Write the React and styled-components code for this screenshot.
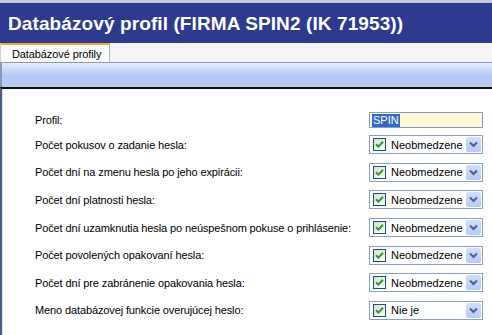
import React from "react";
import styled, { createGlobalStyle } from "styled-components";

const Global = createGlobalStyle`
  html, body { margin: 0; padding: 0; background: #fff; }
  body { font-family: "Liberation Sans", Arial, sans-serif; overflow: hidden; }
`;

const Window = styled.div`
  width: 492px;
  height: 335px;
  display: flex;
  flex-direction: column;
  overflow: hidden;
`;

const TitleBar = styled.div`
  height: 38px;
  padding-top: 2px;
  border-top: 3px solid #c3c7d4;
  background: #2e3a8e;
  color: #fff;
  font-weight: bold;
  font-size: 19px;
  letter-spacing: 0.1px;
  display: flex;
  align-items: center;
  padding-left: 8px;
  white-space: nowrap;
`;

const TabStrip = styled.div`
  height: 19px;
  background: #f4f4f4;
  border-left: 1px solid #d0d0d0;
  display: flex;
  align-items: flex-end;
`;

const Tab = styled.div`
  height: 17px;
  padding: 0 8px 0 11px;
  background: #fdfdfd;
  border-top: 2px solid #f0a83c;
  border-right: 1px solid #a9b0bd;
  font-size: 11px;
  letter-spacing: -0.1px;
  display: flex;
  align-items: center;
  color: #000;
`;

const Band = styled.div`
  height: 24px;
  border-top: 1px solid #8c99b4;
  border-left: 2px solid #8c99b4;
  background: linear-gradient(#e6edfb, #b3c7f3 55%, #bccef5);
`;

const Content = styled.div`
  flex: 1;
  border-top: 2px solid #111;
  border-left: 2px solid #4d5a82;
  box-shadow: inset 1px 0 0 #d6dbe6;
  padding: 20px 0 0 33px;
  display: grid;
  grid-template-columns: 334px 114px;
  grid-auto-rows: 27.6px;
  grid-template-rows: 22px;
  align-items: center;
`;

const Label = styled.div`
  font-size: 11px;
  letter-spacing: -0.12px;
  color: #000;
  white-space: nowrap;
`;

const TextInput = styled.div`
  height: 14px;
  border: 1px solid #8aa0c0;
  background: #fff8d4;
  font-size: 11px;
  display: flex;
  align-items: center;
  padding-left: 2px;
`;

const Selected = styled.span`
  background: #316ac5;
  color: #fff;
  padding: 0 1px;
  line-height: 13px;
`;

const Combo = styled.div`
  height: 17px;
  border: 1px solid #8aa0c0;
  background: #fff;
  display: flex;
  align-items: center;
  padding: 0 1px 0 3px;
  font-size: 11px;
`;

const Check = styled.span`
  width: 11px;
  height: 11px;
  border: 1px solid #1f4d78;
  background: linear-gradient(135deg, #dcdcd6, #fff);
  display: flex;
  align-items: center;
  justify-content: center;
  margin-right: 5px;
`;

const ComboText = styled.span`
  flex: 1;
  color: #000;
  white-space: nowrap;
`;

const DropBtn = styled.span`
  width: 15px;
  height: 15px;
  background: linear-gradient(#d2defc, #b6c9f8);
  border-radius: 2px;
  display: flex;
  align-items: center;
  justify-content: center;
`;

const Tick = () => (
  <svg width="9" height="9" viewBox="0 0 9 9">
    <path d="M1 4.2 L3.4 6.6 L8 1.8" fill="none" stroke="#21a121" strokeWidth="2" />
  </svg>
);

const Chevron = () => (
  <svg width="9" height="7" viewBox="0 0 9 7">
    <path d="M1 1.5 L4.5 5 L8 1.5" fill="none" stroke="#4d6185" strokeWidth="2" />
  </svg>
);

const rows = [
  ["Počet pokusov o zadanie hesla:", "Neobmedzene"],
  ["Počet dní na zmenu hesla po jeho expirácii:", "Neobmedzene"],
  ["Počet dní platnosti hesla:", "Neobmedzene"],
  ["Počet dní uzamknutia hesla po neúspešnom pokuse o prihlásenie:", "Neobmedzene"],
  ["Počet povolených opakovaní hesla:", "Neobmedzene"],
  ["Počet dní pre zabránenie opakovania hesla:", "Neobmedzene"],
  ["Meno databázovej funkcie overujúcej heslo:", "Nie je"],
];

export default function App() {
  return (
    <Window>
      <Global />
      <TitleBar>Databázový profil (FIRMA SPIN2 (IK 71953))</TitleBar>
      <TabStrip>
        <Tab>Databázové profily</Tab>
      </TabStrip>
      <Band />
      <Content>
        <Label>Profil:</Label>
        <TextInput>
          <Selected>SPIN</Selected>
        </TextInput>
        {rows.map(([label, value]) => (
          <React.Fragment key={label}>
            <Label>{label}</Label>
            <Combo>
              <Check>
                <Tick />
              </Check>
              <ComboText>{value}</ComboText>
              <DropBtn>
                <Chevron />
              </DropBtn>
            </Combo>
          </React.Fragment>
        ))}
      </Content>
    </Window>
  );
}
